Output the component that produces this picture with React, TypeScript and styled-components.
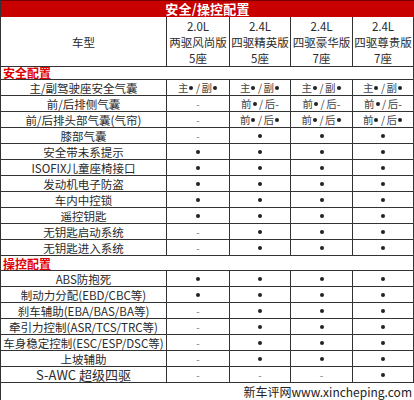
import React from 'react';
import styled, { createGlobalStyle } from 'styled-components';

const GlobalStyle = createGlobalStyle`
  html, body {
    margin: 0;
    padding: 0;
    background: #fff;
  }
  body {
    font-family: "Noto Sans CJK SC", "Noto Sans", sans-serif;
    color: #222;
  }
`;

const COLS = '166px 63px 61px 62px 61px';

const Sheet = styled.div`
  width: 414px;
  height: 400px;
  overflow: hidden;
  box-sizing: border-box;
  border-left: 1px solid #333;
`;

const TitleBar = styled.div`
  height: 17px;
  box-sizing: border-box;
  border-top: 1px solid #7a0000;
  background: #c80000;
  color: #fff;
  font-weight: 700;
  font-size: 13px;
  line-height: 15px;
  text-align: center;
  letter-spacing: 0.2px;
`;

const Row = styled.div<{ $h: number }>`
  display: grid;
  grid-template-columns: ${COLS};
  height: ${(p) => p.$h}px;
  box-sizing: border-box;
`;

const Cell = styled.div<{ $big?: boolean }>`
  box-sizing: border-box;
  border-right: 1px solid #333;
  border-bottom: 1px solid #333;
  display: flex;
  align-items: center;
  justify-content: center;
  white-space: nowrap;
  font-size: ${(p) => (p.$big ? 13 : 11.5)}px;
  line-height: 14px;
  color: #2a2a2a;
  overflow: visible;
`;

const HeadCell = styled(Cell)`
  flex-direction: column;
  font-size: 11.5px;
  line-height: 16px;
  padding-top: 1px;
`;

const SectionRow = styled.div<{ $h: number }>`
  height: ${(p) => p.$h}px;
  box-sizing: border-box;
  border-bottom: 1px solid #333;
  border-right: 1px solid #333;
  padding-left: 2px;
  display: flex;
  align-items: center;
`;

const SectionLabel = styled.span`
  color: #e00000;
  font-weight: 700;
  font-size: 12px;
  line-height: 13px;
`;

const Footer = styled.div`
  height: 17px;
  display: flex;
  align-items: center;
  justify-content: flex-end;
  padding-right: 2px;
  font-size: 12px;
  font-weight: 400;
  color: #222;
`;

const Dot = styled.span`
  display: inline-block;
  width: 4px;
  height: 4px;
  border-radius: 50%;
  background: #222;
  margin: 0 1px;
`;

const Dash = styled.span`
  color: #777;
  font-size: 10px;
`;

const Pair = styled.span`
  display: inline-flex;
  align-items: center;
  font-size: 10.5px;
  color: #444;
`;

const Slash = styled.span`
  margin: 0 1.5px;
`;

type V = 'y' | 'n' | 'ab' | 'fyn' | 'fyy';

function Value({ v }: { v: V }) {
  if (v === 'y') return <Dot />;
  if (v === 'n') return <Dash>-</Dash>;
  if (v === 'ab')
    return (
      <Pair>
        主<Dot />
        <Slash>/</Slash>副<Dot />
      </Pair>
    );
  if (v === 'fyn')
    return (
      <Pair>
        前<Dot />
        <Slash>/</Slash>后-
      </Pair>
    );
  return (
    <Pair>
      前<Dot />
      <Slash>/</Slash>后<Dot />
    </Pair>
  );
}

const trims = [
  ['2.0L', '两驱风尚版', '5座'],
  ['2.4L', '四驱精英版', '5座'],
  ['2.4L', '四驱豪华版', '7座'],
  ['2.4L', '四驱尊贵版', '7座'],
];

const safety: [string, V[]][] = [
  ['主/副驾驶座安全气囊', ['ab', 'ab', 'ab', 'ab']],
  ['前/后排侧气囊', ['n', 'fyn', 'fyn', 'fyn']],
  ['前/后排头部气囊(气帘)', ['n', 'fyy', 'fyy', 'fyy']],
  ['膝部气囊', ['n', 'y', 'y', 'y']],
  ['安全带未系提示', ['y', 'y', 'y', 'y']],
  ['ISOFIX儿童座椅接口', ['y', 'y', 'y', 'y']],
  ['发动机电子防盗', ['y', 'y', 'y', 'y']],
  ['车内中控锁', ['y', 'y', 'y', 'y']],
  ['遥控钥匙', ['y', 'y', 'y', 'y']],
  ['无钥匙启动系统', ['n', 'y', 'y', 'y']],
  ['无钥匙进入系统', ['n', 'y', 'y', 'y']],
];

const handling: [string, V[]][] = [
  ['ABS防抱死', ['y', 'y', 'y', 'y']],
  ['制动力分配(EBD/CBC等)', ['y', 'y', 'y', 'y']],
  ['刹车辅助(EBA/BAS/BA等)', ['n', 'y', 'y', 'y']],
  ['牵引力控制(ASR/TCS/TRC等)', ['n', 'y', 'y', 'y']],
  ['车身稳定控制(ESC/ESP/DSC等)', ['n', 'y', 'y', 'y']],
  ['上坡辅助', ['n', 'y', 'y', 'y']],
  ['S-AWC 超级四驱', ['n', 'n', 'n', 'y']],
];

function DataRows({ rows }: { rows: [string, V[]][] }) {
  return (
    <>
      {rows.map(([label, vals]) => (
        <Row $h={16} key={label}>
          <Cell $big={label.startsWith('S-AWC')}>{label}</Cell>
          {vals.map((v, i) => (
            <Cell key={i}>
              <Value v={v} />
            </Cell>
          ))}
        </Row>
      ))}
    </>
  );
}

export default function App() {
  return (
    <>
      <GlobalStyle />
      <Sheet>
        <TitleBar>安全/操控配置</TitleBar>
        <Row $h={49}>
          <Cell>车型</Cell>
          {trims.map((t, i) => (
            <HeadCell key={i}>
              {t.map((line) => (
                <span key={line}>{line}</span>
              ))}
            </HeadCell>
          ))}
        </Row>
        <SectionRow $h={14}>
          <SectionLabel>安全配置</SectionLabel>
        </SectionRow>
        <DataRows rows={safety} />
        <SectionRow $h={15}>
          <SectionLabel>操控配置</SectionLabel>
        </SectionRow>
        <DataRows rows={handling} />
        <Footer>新车评网www.xincheping.com</Footer>
      </Sheet>
    </>
  );
}
